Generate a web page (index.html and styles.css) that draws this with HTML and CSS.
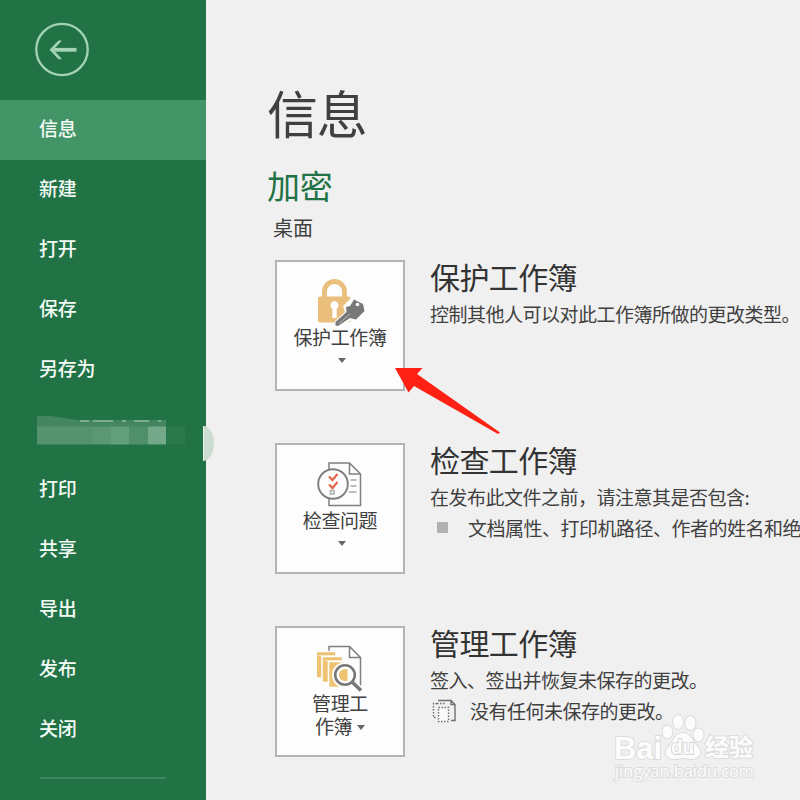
FILE: index.html
```
<!DOCTYPE html>
<html lang="zh-CN">
<head>
  <meta charset="UTF-8" />
  <title>信息</title>
  <link rel="stylesheet" href="styles.css">
</head>
<body>
  <div class="app">
    <nav class="sidebar">
      <div class="back">
        <svg width="56" height="56" viewBox="0 0 56 56" fill="none" stroke="#a3d2b7">
          <circle cx="28" cy="27.5" r="25.7" stroke-width="2.3"/>
          <path d="M42.500 27.800H18" stroke-width="3.800"/>
          <path d="M28 18.500h-3.500L15.500 27.800l9 9.500H28L19.500 27.800z" stroke="none" fill="#a3d2b7"/>
        </svg>
      </div>
      <a class="item active">信息</a>
      <a class="item">新建</a>
      <a class="item">打开</a>
      <a class="item">保存</a>
      <a class="item">另存为</a>
      <div class="item masked">
        <svg width="150" height="32" viewBox="0 0 150 32">
          <path d="M0 0h14l26 4h89v7H0z" fill="#438661"/>
          <path d="M43 5h9M56 5h20M85 5h4M97 5h15M121 5h3" stroke="#8fb9a0" stroke-width="1.500"/>
          <path d="M0 10.500h55v18H0z" fill="#55936f"/>
          <path d="M55 10.500h19v18H55z" fill="#5b9774"/>
          <path d="M74 10.500h18v18H74z" fill="#62a07c"/>
          <path d="M92 10.500h19v18H92z" fill="#4f8f6a"/>
          <path d="M111 10.500h18v18h-18z" fill="#73a98a"/>
          <path d="M129 10.500h19v18h-19z" fill="#2a794d"/>
        </svg>
      </div>
      <a class="item">打印</a>
      <a class="item">共享</a>
      <a class="item">导出</a>
      <a class="item">发布</a>
      <a class="item">关闭</a>
      <div class="divider"></div>
      <div class="handle"></div>
    </nav>

    <main class="content">
      <h1>信息</h1>
      <h2>加密</h2>
      <p class="path">桌面</p>

      <section class="row">
        <div class="tile">
          <svg class="tile-icon" width="50" height="50" viewBox="0 0 50 50">
            <path d="M7.500 20V12.500a10 10 0 0 1 20 0V20" fill="none" stroke="#e9bf7b" stroke-width="4.800"/>
            <rect x="1" y="17.500" width="32.500" height="26" rx="2" fill="#e9bf7b"/>
            <path d="M17.500 22a4.200 4.200 0 0 1 2.200 7.600V39h-4.400v-9.400a4.200 4.200 0 0 1 2.200-7.600z" fill="#fff"/>
            <path d="M26 27l10-10 14 9-7 15-8-1-11 10-7-3 1-5 10-9z" fill="#fdfdfd"/>
            <path d="M29 28l4-1 4-6.500 9 4.500 1.500 7-8.500 8.500-6-1.500-12 8-2.500-.5V43l11-10z" fill="#787878"/>
            <circle cx="40.500" cy="25.500" r="1.800" fill="#fff"/>
            <path d="M22 44.500L33 35" stroke="#bbb"/>
          </svg>
          <span class="label">保护工作簿</span>
          <i class="caret"></i>
        </div>
        <div class="text">
          <h3>保护工作簿</h3>
          <p>控制其他人可以对此工作簿所做的更改类型。</p>
        </div>
      </section>

      <section class="row">
        <div class="tile">
          <svg class="tile-icon" width="50" height="50" viewBox="0 0 50 50" fill="none" stroke="#7f7f7f" stroke-width="1.500">
            <path d="M12 1h20.500L43.500 12V43.500H12z" fill="#fdfdfd"/>
            <path d="M32.500 1v11h11"/>
            <path d="M33.500 18h6M33.500 24h6M32 30h7.500" stroke="#a5a5a5"/>
            <circle cx="16" cy="22" r="14.800" fill="#fdfdfd" stroke-width="1.900"/>
            <path d="M12 14.500l3.500 3.500 5-6M12 22.500l3.500 3.500 5-6" stroke="#e2674a" stroke-width="2.200"/>
            <rect x="13.500" y="28.500" width="3.500" height="3.500" stroke="#aaa"/>
          </svg>
          <span class="label">检查问题</span>
          <i class="caret"></i>
        </div>
        <div class="text">
          <h3>检查工作簿</h3>
          <p>在发布此文件之前，请注意其是否包含:</p>
          <div class="sub"><i class="bullet"></i><span>文档属性、打印机路径、作者的姓名和绝</span></div>
        </div>
      </section>

      <section class="row">
        <div class="tile">
          <svg class="tile-icon" width="50" height="50" viewBox="0 0 50 50">
            <path d="M12 6V1.500h20.500L43.500 12.500V41" fill="none" stroke="#7f7f7f" stroke-width="1.500"/>
            <path d="M32.500 1.500v11h11" fill="none" stroke="#7f7f7f" stroke-width="1.500"/>
            <g fill="#edc372" stroke="#fdfdfd" stroke-width="1.600">
              <path d="M-1.500 6.500H19V33H-1.500z"/>
              <path d="M5 11.500h20.500v26H5z"/>
              <path d="M11.500 16.500h21v26h-21z"/>
            </g>
            <path d="M1 10.500h17M7.500 15.500h17" stroke="#fdfdfd" stroke-width=".6"/>
            <circle cx="28" cy="30" r="10.500" fill="#fdfdfd" stroke="#fdfdfd" stroke-width="5"/>
            <path d="M35 37l9 8.500" stroke="#fdfdfd" stroke-width="7"/>
            <path d="M30.500 24v12H28a6 6 0 0 1 0-12z" fill="#edc372"/>
            <circle cx="28" cy="30" r="9.800" fill="none" stroke="#777" stroke-width="2.600"/>
            <path d="M35 37l9 8.500" stroke="#777" stroke-width="3.600"/>
          </svg>
          <span class="label">管理工<br>作簿<i class="caret inline"></i></span>
        </div>
        <div class="text">
          <h3>管理工作簿</h3>
          <p>签入、签出并恢复未保存的更改。</p>
          <div class="sub">
            <svg class="draft" width="26" height="24" viewBox="0 0 26 24" fill="none" stroke="#6f6f6f" stroke-width="1.400">
              <path d="M6 1.500h13l4 4V21.500h-4"/>
              <path d="M19 1.500v4h4"/>
              <path d="M6.500 8.500h10v14h-10z" fill="#fafafa" stroke-dasharray="1.500 1.500"/>
              <path d="M5 4.500H1.500v14H4M5 4.500h9" stroke-dasharray="1.500 1.500"/>
            </svg>
            <span>没有任何未保存的更改。</span>
          </div>
        </div>
      </section>
    </main>

    <svg class="pointer" width="110" height="70" viewBox="0 0 110 70">
      <path d="M1 1L28.500 1 23 7 106 65.500 104 67 20 19 14.500 25.500z" fill="#ff2214"/>
    </svg>

    <div class="watermark">
      <svg width="150" height="76" viewBox="0 0 150 76">
        <g class="mark">
          <ellipse cx="58.500" cy="19" rx="5" ry="6.500"/>
          <ellipse cx="69" cy="9" rx="5" ry="7"/>
          <ellipse cx="81.500" cy="10" rx="5" ry="7"/>
          <ellipse cx="89.500" cy="22" rx="5" ry="6.500"/>
          <path d="M74 20c8 0 9 8 14 13 6 6 3 13-6 13-3 0-5-1-8-1s-5 1-9 1c-8 0-11-7-5-13 5-5 6-13 14-13z"/>
          <text x="5" y="46" font-size="31" font-weight="700" textLength="48" lengthAdjust="spacingAndGlyphs">Bai</text>
          <text x="96" y="43" font-size="24" font-weight="700" textLength="48" lengthAdjust="spacingAndGlyphs">经验</text>
          <text class="url" x="6" y="64" font-size="17" textLength="139" lengthAdjust="spacingAndGlyphs">jingyan.baidu.com</text>
        </g>
        <text class="du" x="62" y="41" font-size="20" textLength="23" lengthAdjust="spacingAndGlyphs">du</text>
      </svg>
    </div>
  </div>
</body>
</html>
```
FILE: styles.css
```
* {
  box-sizing: border-box;
}
body {
  margin: 0;
  background: #f0f0f0;
  color: #404040;
  font-family: "Noto Sans CJK SC", sans-serif;
  overflow: hidden;
}
h1, h2, h3, p {
  margin: 0;
  font-weight: 400;
}
.app {
  position: relative;
  display: flex;
  width: 800px;
  height: 800px;
  overflow: hidden;
}
.sidebar {
  position: relative;
  flex: none;
  width: 206px;
  background: #217346;
}
.back {
  height: 100px;
  padding: 22px 0 0 34px;
}
.item {
  display: block;
  height: 60px;
  padding-left: 39px;
  line-height: 56px;
  font-size: 19px;
  letter-spacing: -0.3px;
  color: #f4faf6;
  font-weight: 500;
}
.item.active {
  background: #439467;
}
.masked {
  padding: 16px 0 0 37px;
  line-height: 0;
}
.divider {
  width: 126px;
  height: 2px;
  margin: 17px 0 0 40px;
  background: #3c8a60;
}
.handle {
  position: absolute;
  left: 203px;
  top: 426px;
  width: 11px;
  height: 35px;
  background: #cbdcd3;
  border-left: 1px solid #e8f0eb;
  border-radius: 0 11px 11px 0 / 0 18px 18px 0;
}
.content {
  flex: none;
  width: 594px;
  padding: 78px 0 0 61px;
}
h1 {
  height: 86px;
  line-height: 68px;
  font-size: 51px;
  letter-spacing: -1.3px;
}
h2 {
  height: 48px;
  line-height: 43px;
  font-size: 33px;
  letter-spacing: -0.3px;
  color: #217346;
}
.path {
  height: 48px;
  padding-left: 6px;
  line-height: 31px;
  font-size: 20px;
}
.row {
  display: flex;
  gap: 25px;
  height: 183px;
  padding-left: 8px;
}
.tile {
  display: flex;
  flex: none;
  flex-direction: column;
  align-items: center;
  width: 130px;
  height: 131px;
  padding-top: 17px;
  background: #fdfdfd;
  border: 2px solid #b4b4b4;
}
.tile-icon {
  flex: none;
  margin-left: 4px;
}
.label {
  margin-top: -4px;
  line-height: 23px;
  font-size: 19px;
  letter-spacing: -0.4px;
  text-align: center;
}
.caret {
  margin: 10px 0 0 4px;
  border: 4px solid transparent;
  border-top: 5px solid #666;
  border-bottom: 0;
}
.caret.inline {
  display: inline-block;
  margin: 0 0 4px 5px;
}
.text {
  white-space: nowrap;
}
h3 {
  height: 39px;
  line-height: 33px;
  font-size: 30px;
  letter-spacing: -0.6px;
  color: #333;
}
.text p {
  height: 30px;
  line-height: 29px;
  font-size: 19px;
  letter-spacing: -0.5px;
}
.sub {
  display: flex;
  align-items: center;
  height: 31px;
  font-size: 19px;
  letter-spacing: -0.5px;
}
.bullet {
  width: 11px;
  height: 11px;
  margin: 0 20px 0 7px;
  background: #b1b1b1;
}
.draft {
  margin: 0 12px 0 2px;
}
.pointer {
  position: absolute;
  left: 394px;
  top: 367px;
}
.watermark {
  position: absolute;
  left: 609px;
  top: 713px;
  font-family: "Liberation Sans", "Noto Sans CJK SC", sans-serif;
}
.mark {
  fill: #fcfcfc;
  stroke: #dcdcdc;
  stroke-width: 2px;
  paint-order: stroke;
}
.url {
  font-family: "Open Sans", sans-serif;
}
.du {
  fill: #fcfcfc;
  stroke: #d4d4d4;
  stroke-width: 2px;
  paint-order: stroke;
  font-weight: 700;
}
```
